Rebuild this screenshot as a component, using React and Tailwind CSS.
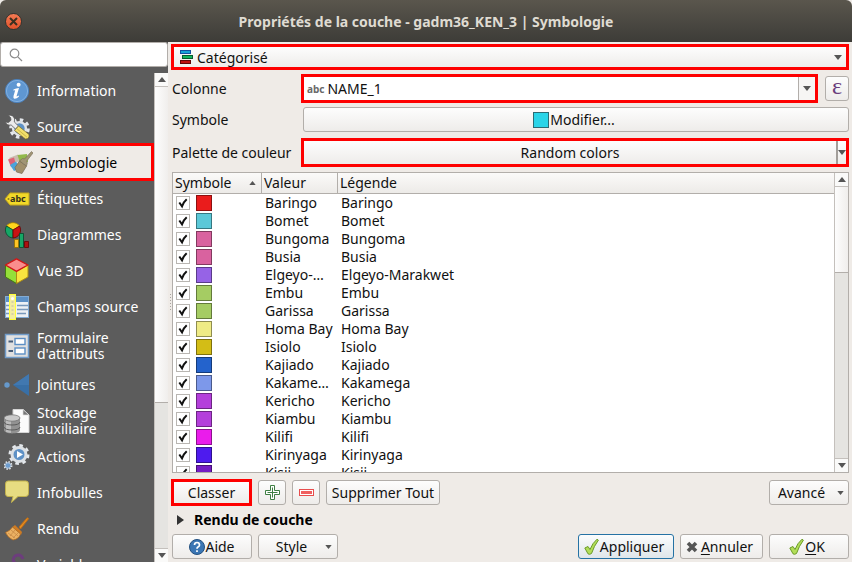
import React from "react";

const entries = [
  ["Baringo", "#ea1c1c"],
  ["Bomet", "#5bc8d8"],
  ["Bungoma", "#d9629f"],
  ["Busia", "#d9629f"],
  ["Elgeyo-Marakwet", "#9663e6"],
  ["Embu", "#a5cc63"],
  ["Garissa", "#a5cc63"],
  ["Homa Bay", "#efeb85"],
  ["Isiolo", "#d3bd16"],
  ["Kajiado", "#2463cc"],
  ["Kakamega", "#7d98ea"],
  ["Kericho", "#b43fdb"],
  ["Kiambu", "#b43fdb"],
  ["Kilifi", "#ea1ceb"],
  ["Kirinyaga", "#4e1bee"],
  ["Kisii", "#741cc4"],
];

const face = "border border-[#b2aeaa] bg-linear-to-b from-[#fdfdfd] to-[#eeecea]";
const button = `${face} flex items-center justify-center rounded-[3px] whitespace-nowrap h-[25px]`;

function Arrow({ up = false, small = false }) {
  return (
    <svg className={small ? "h-1 w-[7px] shrink-0" : "h-[5px] w-2 shrink-0"} viewBox="0 0 8 5" aria-hidden="true">
      <path d={up ? "M0 5L4 0L8 5Z" : "M0 0H8L4 5Z"} fill="#555" />
    </svg>
  );
}

function ScrollBar({ thumb }) {
  return (
    <div className="flex w-[14px] shrink-0 flex-col border-l border-[#c4c0bc] bg-[#e5e4e1]">
      <button aria-label="Monter" className="flex h-[14px] shrink-0 items-center justify-center border-b border-[#c4c0bc] bg-[#fafaf9]"><Arrow up /></button>
      <div className="min-h-0 flex-1">
        <div className={`${thumb} border-b border-[#b2aeaa] bg-linear-to-r from-[#fdfdfd] to-[#f0eeec]`} />
      </div>
      <button aria-label="Descendre" className="flex h-[14px] shrink-0 items-center justify-center border-t border-[#c4c0bc] bg-[#fafaf9]"><Arrow /></button>
    </div>
  );
}

function Ico({ children }) {
  return <svg className="h-[26px] w-[26px] shrink-0" viewBox="0 0 26 26" aria-hidden="true">{children}</svg>;
}

const gear = (cx, cy, r, w) => (
  <circle cx={cx} cy={cy} r={r} fill="none" stroke="#e4e8ec" strokeWidth={w} strokeDasharray={`${(r * Math.PI) / 8} ${(r * Math.PI) / 8}`} />
);

const icons = {
  info: (
    <Ico>
      <circle cx="13" cy="13" r="11.6" fill="#5f97d2" stroke="#4b80bb" />
      <circle cx="13" cy="13" r="10.6" fill="none" stroke="#81afdf" />
      <circle cx="14.6" cy="6.8" r="2" fill="#fff" />
      <path d="M9.5 11.5Q12 10 15 10L12.6 18Q12.4 19 15 17.6L14.8 18.8Q12.5 21 10.4 20.8Q9 20.4 9.5 18L11.2 12.2L9.3 12.5Z" fill="#fff" />
    </Ico>
  ),
  source: (
    <Ico>
      {gear(15.5, 14.5, 8.6, 3.4)}
      <circle cx="15.5" cy="14.5" r="6.4" fill="#5f92c6" stroke="#e2e5e8" strokeWidth="2.4" />
      <path d="M4 1.2Q9.5 .6 10.6 5L10.3 8L14.5 12L11.5 15L7.2 11Q3 11.8 1.2 8L4.5 8.6L7 6.2L6.6 3.6Z" fill="#ececec" stroke="#5c5c5c" strokeWidth=".8" />
      <path d="M10.5 16.5L14.5 12L25 20.5Q25.6 24.8 21.5 25Z" fill="#f3e06a" stroke="#77692b" strokeWidth=".7" />
      <path d="M13.2 15L22.8 23" stroke="#cdb74c" strokeWidth="1" />
    </Ico>
  ),
  paint: (
    <Ico>
      <path d="M2 9L11 5.5L14 12L5 14Z" fill="#c9bcae" />
      <path d="M10.5 6L20 5L21 13L13 14Z" fill="#92b84a" />
      <path d="M1 10.5L7 8.5L9 15.5L4 18Z" fill="#df6277" />
      <path d="M3 16L9 12.5L13 19L7 22Z" fill="#4aa4dc" />
      <path d="M9.5 23L8 18.5L12.5 12L19.5 17L15 24.5Z" fill="#a08f6b" stroke="#756a54" strokeWidth=".7" />
      <path d="M12.5 12L15.5 9.5L17.5 10L24.5 2.5L26 4L19.8 12Q21 14 19.5 17Z" fill="#a19575" stroke="#756a54" strokeWidth=".6" />
    </Ico>
  ),
  label: (
    <Ico>
      <path d="M1 13L6 7H25V19H6Z" fill="#f2d929" stroke="#c5a71c" />
      <circle cx="4.5" cy="13" r="1" fill="#907e20" />
      <text x="6" y="16" fontSize="9" fontWeight="700" fontFamily="Noto Sans, sans-serif" fill="#33301a">abc</text>
    </Ico>
  ),
  chart: (
    <Ico>
      <path d="M9 8L2.5 4A8 8 0 0 1 15.5 4Z" fill="#ffd51c" stroke="#a88300" strokeWidth=".8" />
      <path d="M9 8L2.5 4A8 8 0 0 0 9 16Z" fill="#16a766" stroke="#06472b" strokeWidth=".8" />
      <path d="M9 8L15.5 4A8 8 0 0 1 9 16Z" fill="#c81313" stroke="#600" strokeWidth=".8" />
      <path d="M10.5 17.5H14.5V25.5H10.5Z" fill="#ffc526" stroke="#926d00" strokeWidth=".8" />
      <path d="M15.5 11.5H19.5V25.5H15.5Z" fill="#16a766" stroke="#06472b" strokeWidth=".8" />
      <path d="M20.5 19.5H24.5V25.5H20.5Z" fill="#aa1111" stroke="#600" strokeWidth=".8" />
    </Ico>
  ),
  cube: (
    <Ico>
      <path d="M1.5 7L12.5 13V25.5L1.5 19Z" fill="#95df39" stroke="#447a12" strokeLinejoin="round" />
      <path d="M24 7L12.5 13V25.5L24 19Z" fill="#f8e33f" stroke="#ad8b14" strokeLinejoin="round" />
      <path d="M12.5 .8L23.8 7L12.5 13.4L1.5 7Z" fill="#fa8d8d" stroke="#d11616" strokeWidth="1.4" strokeLinejoin="round" />
    </Ico>
  ),
  fields: (
    <Ico>
      <rect x="1.5" y="2.5" width="23" height="21" fill="#edf1f5" stroke="#82abd4" />
      <path d="M2 3H24V8H2Z" fill="#5d91c7" />
      <path d="M13 11.5H24M13 15.5H24M13 19.5H22M2 11.5H6M2 15.5H6M2 19.5H6" stroke="#7899bc" strokeWidth="1.4" />
      <rect x="5.5" y=".5" width="6" height="25" fill="#f3eda0" stroke="#ffff3b" />
      <path d="M8.5 7V23" stroke="#d8d2a6" strokeWidth="2" strokeDasharray="2 2" />
      <circle cx="8.5" cy="4.5" r="1.5" fill="#fff" />
    </Ico>
  ),
  form: (
    <Ico>
      <rect x="1.5" y="1.5" width="23" height="23" fill="#e0e0e0" stroke="#719cc9" strokeWidth="1.5" />
      <path d="M4.5 8.5H9M4.5 18H9" stroke="#465c78" strokeWidth="2" />
      <rect x="11" y="5.5" width="10" height="6" fill="#fff" stroke="#5c8fc5" strokeWidth="1.4" />
      <rect x="11" y="15" width="10" height="6" fill="#fff" stroke="#5c8fc5" strokeWidth="1.4" />
    </Ico>
  ),
  join: (
    <Ico>
      <circle cx="3" cy="13" r="2.7" fill="#6699cc" />
      <path d="M9 13L25 2V24Z" fill="#386fa6" />
      <path d="M9 13L25 2V13Z" fill="#4178b0" />
    </Ico>
  ),
  storage: (
    <Ico>
      <path d="M9 1.5H19L25 7V24.5H9Z" fill="#fbfbfb" stroke="#d4d4d4" />
      <path d="M19 1.5V7H25Z" fill="#777" stroke="#ddd" strokeWidth=".7" />
      <path d="M0 10V22C0 26.5 16 26.5 16 22V10Z" fill="#929292" />
      <path d="M2 11V24L7 25V12Z" fill="#d3d3d3" opacity=".65" />
      <ellipse cx="8" cy="10" rx="8" ry="3.2" fill="#c9c9c9" stroke="#6b6b6b" strokeWidth=".7" />
      <path d="M0 14C0 18 16 18 16 14M0 19C0 23 16 23 16 19" fill="none" stroke="#555" strokeWidth=".9" />
    </Ico>
  ),
  actions: (
    <Ico>
      {gear(15, 10.5, 9, 3)}
      <circle cx="15" cy="10.5" r="7" fill="#5e91c6" stroke="#dce0e4" strokeWidth="3" />
      <path d="M13 7L19 10.5L13 14Z" fill="#fff" />
      {gear(4, 21.5, 3.5, 2)}
      <circle cx="4" cy="21.5" r="2.8" fill="#6d9dcf" stroke="#b8cade" />
    </Ico>
  ),
  tips: (
    <Ico>
      <path d="M4 1H22Q24.5 1 24.5 4V13.5Q24.5 16.5 21.5 16.5H14L7.5 22.5L9 16.5H4Q1.5 16.5 1.5 13.5V4Q1.5 1 4 1Z" fill="#e7dc81" stroke="#c1b14d" />
    </Ico>
  ),
  broom: (
    <Ico>
      <path d="M15 11L22.5 2.5Q24 1 24.5 2.8L16.5 13Z" fill="#e58a1f" stroke="#bd6d15" />
      <path d="M11 9L18 16L17 19L8.5 11Z" fill="#cf7b22" />
      <path d="M8.5 11L16.5 18Q15 23 9 24Q4 22 1.5 16.5Q6 15 8.5 11Z" fill="#ebb163" stroke="#a9641d" strokeWidth=".7" />
      <path d="M4 17L11 22M7 14L14 20M6 20L11 14M9 22L14 17" stroke="#c48542" strokeWidth=".7" />
    </Ico>
  ),
  variable: (
    <Ico>
      <path d="M19 7Q17 1 11 4Q7 8 12 12Q6 16 10 20Q15 24 20 18" fill="none" stroke="#6d3d7d" strokeWidth="3" />
    </Ico>
  ),
};

const nav = [
  ["info", "Information"],
  ["source", "Source"],
  ["paint", "Symbologie"],
  ["label", "Étiquettes"],
  ["chart", "Diagrammes"],
  ["cube", "Vue 3D"],
  ["fields", "Champs source"],
  ["form", "Formulaire d'attributs"],
  ["join", "Jointures"],
  ["storage", "Stockage auxiliaire"],
  ["actions", "Actions"],
  ["tips", "Infobulles"],
  ["broom", "Rendu"],
  ["variable", "Variables"],
];

function Sidebar() {
  return (
    <aside className="flex w-[168px] shrink-0 flex-col bg-[#5c5c5c]">
      <label className="mb-[6px] flex h-[25px] shrink-0 items-center rounded-[3px] border border-[#b2aeaa] bg-white pl-2">
        <svg className="h-[14px] w-[14px]" viewBox="0 0 14 14" fill="none" stroke="#8c8c8c" strokeWidth="1.2" aria-hidden="true">
          <circle cx="5.5" cy="5.5" r="4.3" />
          <path d="M8.8 8.8L13 13" />
        </svg>
        <input type="search" aria-label="Rechercher" className="min-w-0 flex-1 outline-none" />
      </label>
      <div className="flex min-h-0 flex-1">
        <nav className="min-w-0 flex-1 overflow-hidden">
          {nav.map(([icon, name]) => (
            <button
              key={name}
              className={
                icon === "paint"
                  ? "-mt-[2px] flex h-[38px] w-full items-center gap-[7px] border-3 border-[#fe0000] bg-[#efebe7] pl-1 text-left text-black"
                  : icon === "form"
                    ? "flex h-[42px] w-full items-center gap-[7px] pl-1 text-left leading-4 text-white"
                    : "flex h-9 w-full items-center gap-[7px] pl-1 text-left leading-4 text-white"
              }
            >
              {icons[icon]}
              <span>{name}</span>
            </button>
          ))}
        </nav>
        <ScrollBar thumb="h-[316px]" />
      </div>
    </aside>
  );
}

function Check() {
  return (
    <svg className="h-[18px] w-[15px] shrink-0" viewBox="0 0 15 18" aria-hidden="true">
      <path d="M.8 10L4 8.5L6 11.5Q8.5 5 13 1.2L14.4 2.2Q10 8 7.5 15.5Q5.5 17 4 15.8Z" fill="#b2de58" stroke="#6a9a2a" strokeLinejoin="round" />
    </svg>
  );
}

function Legend() {
  return (
    <div className="flex min-h-0 flex-1 border border-[#b2aeaa] bg-white">
      <div className="min-w-0 flex-1 overflow-hidden">
        <table className="w-full table-fixed border-separate border-spacing-0">
          <thead>
            <tr className="h-[21px] bg-linear-to-b from-[#fbfaf9] to-[#eceae7] text-left leading-5">
              <th className="w-[89px] border-r border-b border-[#b2aeaa] p-0 pl-[2px] font-normal">
                <span className="flex items-center justify-between pr-[5px]">Symbole <Arrow up small /></span>
              </th>
              <th className="w-[76px] border-r border-b border-[#b2aeaa] p-0 pl-[2px] font-normal">Valeur</th>
              <th className="border-b border-[#b2aeaa] p-0 pl-[2px] font-normal">Légende</th>
            </tr>
          </thead>
          <tbody>
            {entries.map(([name, color]) => (
              <tr key={name} className="h-[18px] leading-[18px]">
                <td className="p-0 pl-[3px]">
                  <span className="flex items-center gap-[6px]">
                    <span className="grid">
                      <input type="checkbox" defaultChecked aria-label={name} className="peer col-start-1 row-start-1 h-[14px] w-[14px] appearance-none border border-[#b9b6b2] bg-white" />
                      <svg className="pointer-events-none invisible col-start-1 row-start-1 h-[14px] w-[14px] peer-checked:visible" viewBox="0 0 14 14" fill="none" stroke="#111" strokeWidth="2" aria-hidden="true">
                        <path d="M3.3 6.5L6 10.3Q7.5 6 10.7 3.2" />
                      </svg>
                    </span>
                    <span className="h-4 w-4 border border-black/40" style={{ backgroundColor: color }} />
                  </span>
                </td>
                <td className="truncate p-0 pr-1 pl-[3px]">{name}</td>
                <td className="truncate p-0 pl-[3px]">{name}</td>
              </tr>
            ))}
          </tbody>
        </table>
      </div>
      <ScrollBar thumb="h-[86px]" />
    </div>
  );
}

export default function App() {
  return (
    <div className="flex h-screen flex-col overflow-hidden bg-[#efebe7] font-['Noto_Sans',sans-serif] text-[14px] text-[#111]">
      <header className="flex h-[42px] shrink-0 items-center rounded-t-md bg-linear-to-b from-[#5a564d] to-[#3d3c38] px-[5px]">
        <button aria-label="Fermer" className="flex h-[17px] w-[17px] items-center justify-center rounded-full border border-[#35332f] bg-linear-to-b from-[#f47a53] to-[#e2522a]">
          <svg className="h-[9px] w-[9px]" viewBox="0 0 9 9" aria-hidden="true"><path d="M1 1L8 8M8 1L1 8" stroke="#3c3020" strokeWidth="2" /></svg>
        </button>
        <h1 className="flex-1 pr-[17px] text-center font-bold text-[#dfdbd2]">Propriétés de la couche - gadm36_KEN_3 | Symbologie</h1>
      </header>
      <div className="flex min-h-0 flex-1">
        <Sidebar />
        <div className="flex w-[3px] shrink-0 flex-col items-center justify-center gap-[2px] pl-px">
          {[0, 1, 2, 3, 4, 5].map((dot) => (
            <span key={dot} className="h-px w-px bg-[#a8a49f]" />
          ))}
        </div>
        <main className="flex min-w-0 flex-1 flex-col pt-[2px] pr-[3px] pb-[3px]">
          <div className="flex h-[26px] shrink-0 items-center border-3 border-[#fe0000] bg-linear-to-b from-[#fdfdfd] to-[#eeecea] pr-1 pl-[6px]">
            <svg className="h-[14px] w-[13px] shrink-0" viewBox="0 0 13 14" aria-hidden="true">
              <rect x=".5" y=".5" width="10" height="3" fill="#18a3d6" stroke="#1450a0" />
              <rect x="2.5" y="5.5" width="10" height="3" fill="#12b45c" stroke="#075c2d" />
              <rect x=".5" y="10.5" width="10" height="3" fill="#c01010" stroke="#640606" />
            </svg>
            <select aria-label="Type de symbologie" className="min-w-0 flex-1 appearance-none pl-1 outline-none"><option>Catégorisé</option></select>
            <Arrow />
          </div>
          <div className="mt-1 grid shrink-0 grid-cols-[130px_1fr] items-center">
            <label htmlFor="colonne" className="pl-px">Colonne</label>
            <div className="flex items-center gap-[7px]">
              <div className="flex h-[29px] min-w-0 flex-1 items-center border-3 border-[#fe0000] bg-white pl-[3px]">
                <span className="text-[10px] leading-4 font-bold text-[#6a6a6a]">abc</span>
                <select id="colonne" className="min-w-0 flex-1 appearance-none pl-[3px] outline-none"><option>NAME_1</option></select>
                <span className="flex h-full w-[17px] items-center justify-center border-l border-[#b2aeaa] bg-[#f6f5f4]"><Arrow /></span>
              </div>
              <button className={`${button} w-6 pb-[6px] font-['Liberation_Serif',serif] text-[24px] leading-4 text-[#6a3d7c]`} aria-label="Expression">ε</button>
            </div>
          </div>
          <div className="mt-1 grid shrink-0 grid-cols-[132px_1fr] items-center">
            <label htmlFor="modifier" className="pl-px">Symbole</label>
            <button id="modifier" className={`${button} pr-1`}><span className="mr-px h-4 w-4 border border-[#2c6b74] bg-[#2ad4e8]" />Modifier...</button>
          </div>
          <div className="mt-[6px] grid shrink-0 grid-cols-[130px_1fr] items-center">
            <label htmlFor="palette" className="pl-px whitespace-nowrap">Palette de couleur</label>
            <div className="flex h-[29px] border-3 border-[#fe0000] bg-linear-to-b from-[#fdfdfd] to-[#eeecea]">
              <button id="palette" className="flex-1">Random colors</button>
              <button aria-label="Choisir la palette" className="flex w-[10px] items-center justify-center border-l-2 border-[#a29e9a]"><Arrow /></button>
            </div>
          </div>
          <div className="mt-[5px] flex min-h-0 flex-1 pl-px"><Legend /></div>
          <div className="mt-[6px] flex h-[27px] shrink-0 items-center gap-[6px]">
            <button className="h-[27px] w-[81px] border-3 border-[#fe0000] bg-linear-to-b from-[#fdfdfd] to-[#eeecea]">Classer</button>
            <button aria-label="Ajouter" className={`${button} w-7`}>
              <svg className="h-[15px] w-[15px]" viewBox="0 0 15 15" fill="#fff" aria-hidden="true">
                <path d="M5.5 .5H9.5V5.5H14.5V9.5H9.5V14.5H5.5V9.5H.5V5.5H5.5Z" stroke="#3f7f43" />
                <path d="M7.5 2.5V12.5M2.5 7.5H12.5" stroke="#3f7f43" />
              </svg>
            </button>
            <button aria-label="Supprimer" className={`${button} w-7`}>
              <svg className="h-[7px] w-[15px]" viewBox="0 0 15 7" aria-hidden="true">
                <rect x=".5" y=".5" width="14" height="6" fill="#fff" stroke="#e84e4e" />
                <rect x="2" y="2" width="11" height="3" fill="#f06060" />
              </svg>
            </button>
            <button className={`${button} w-[114px]`}>Supprimer Tout</button>
            <button className={`${button} ml-auto w-20 gap-3 pl-1`}>Avancé <Arrow small /></button>
          </div>
          <div className="flex h-7 shrink-0 items-center">
            <button className="flex items-center gap-[10px] pl-[6px] leading-4 font-bold text-black">
              <svg className="h-[10px] w-[7px]" viewBox="0 0 7 10" aria-hidden="true"><path d="M0 0L7 5L0 10Z" fill="#333" /></svg>
              Rendu de couche
            </button>
          </div>
          <div className="flex shrink-0 items-center gap-[6px] pl-px">
            <button className={`${button} w-20`}>
              <svg className="h-4 w-4" viewBox="0 0 16 16" aria-hidden="true">
                <circle cx="8" cy="8" r="7.5" fill="#3b76b4" stroke="#24507f" />
                <path d="M5.5 6Q5.5 3.5 8 3.5T10.5 6Q10.5 7.2 9 8Q8 8.7 8 9.8M8 11.3V13" fill="none" stroke="#fff" strokeWidth="1.7" />
              </svg>
              Aide
            </button>
            <button className={`${button} w-20 gap-[18px] pl-3`}>Style <Arrow small /></button>
            <button className="ml-auto flex h-[25px] w-24 items-center justify-center gap-px rounded-[3px] border border-[#2572a4] bg-linear-to-b from-[#fbfcfd] to-[#dfe6ea] pr-1"><Check />Appliquer</button>
            <button className={`${button} w-[83px] gap-[3px] pr-1`}>
              <svg className="h-3 w-3" viewBox="0 0 12 12" aria-hidden="true"><path d="M2 2L10 10M10 2L2 10" stroke="#555" strokeWidth="3.6" /></svg>
              <span><u className="underline-offset-2">A</u>nnuler</span>
            </button>
            <button className={`${button} w-20 gap-px pr-1`}><Check /><span><u className="underline-offset-2">O</u>K</span></button>
          </div>
        </main>
      </div>
    </div>
  );
}
